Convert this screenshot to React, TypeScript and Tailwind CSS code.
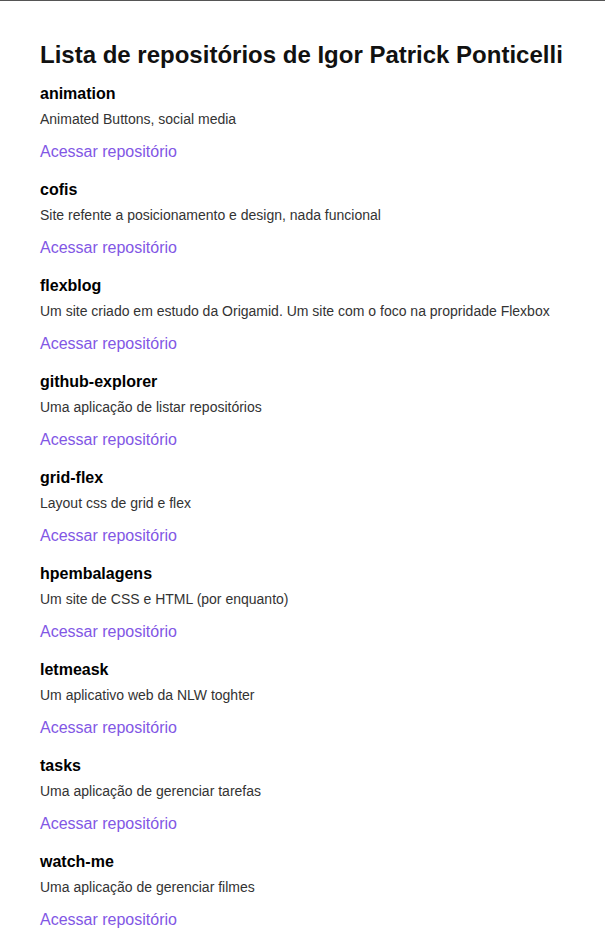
const repos = [
  { name: "animation", description: "Animated Buttons, social media" },
  { name: "cofis", description: "Site refente a posicionamento e design, nada funcional" },
  {
    name: "flexblog",
    description: "Um site criado em estudo da Origamid. Um site com o foco na propridade Flexbox",
  },
  { name: "github-explorer", description: "Uma aplicação de listar repositórios" },
  { name: "grid-flex", description: "Layout css de grid e flex" },
  { name: "hpembalagens", description: "Um site de CSS e HTML (por enquanto)" },
  { name: "letmeask", description: "Um aplicativo web da NLW toghter" },
  { name: "tasks", description: "Uma aplicação de gerenciar tarefas" },
  { name: "watch-me", description: "Uma aplicação de gerenciar filmes" },
];

export default function App() {
  return (
    <div className="min-h-screen bg-white border-t border-[#555] font-['Liberation_Sans',Arial,sans-serif]">
      <section className="px-10 pt-10">
        {/* Title */}
        <h1 className="text-2xl leading-7 font-bold text-[#111]">
          Lista de repositórios de Igor Patrick Ponticelli
        </h1>

        {/* List */}
        <ul className="mt-[15px] flex flex-col gap-[18px]">
          {repos.map((repo) => (
            <li key={repo.name} className="flex flex-col">
              <strong className="text-base leading-5 font-bold text-black">{repo.name}</strong>
              <p className="mt-[5px] text-sm leading-5 text-[#333]">{repo.description}</p>
              <a href="#" className="mt-[13px] text-base leading-5 text-[#8257e5]">
                Acessar repositório
              </a>
            </li>
          ))}
        </ul>
      </section>
    </div>
  );
}
